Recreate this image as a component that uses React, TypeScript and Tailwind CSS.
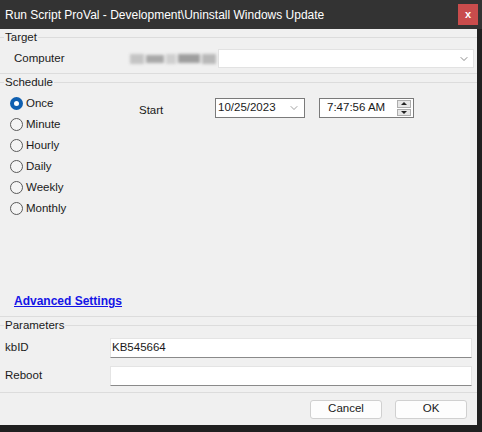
import { ChevronDown } from "lucide-react";

const font = { fontFamily: '"Liberation Sans", Arial, sans-serif' };

function Legend({ label }: { label: string }) {
  return (
    <div className="h-[14px] flex items-center">
      <div className="w-[4px] h-px bg-[#dcdcdc]" />
      <span className="px-[1px] text-[11.5px] leading-[14px] text-[#1a1a1a]">{label}</span>
      <div className="flex-1 h-px bg-[#dcdcdc]" />
    </div>
  );
}

function Radio({ label, checked }: { label: string; checked?: boolean }) {
  return (
    <div className="h-[21px] flex items-center gap-[3px]">
      {checked ? (
        <div className="w-[13px] h-[13px] rounded-full bg-[#0f5fb0] flex items-center justify-center">
          <div className="w-[5px] h-[5px] rounded-full bg-white" />
        </div>
      ) : (
        <div className="w-[13px] h-[13px] rounded-full border border-[#5a5a5a] bg-[#f4f4f4]" />
      )}
      <span className="text-[11.5px] text-[#1a1a1a]">{label}</span>
    </div>
  );
}

function ParamRow({ label, value }: { label: string; value?: string }) {
  return (
    <div className="h-[28px] flex items-center">
      <span className="w-[110px] pl-[5px] text-[11.5px] text-[#1a1a1a]">{label}</span>
      <div className="w-[362px] h-[20px] bg-white border border-[#e4e4e4] border-b-[#8a8a8a] flex items-center px-[1px] text-[11.5px] text-[#1a1a1a]">
        {value}
      </div>
    </div>
  );
}

export default function App() {
  return (
    <div className="w-[482px] h-[432px] bg-[#202020] flex flex-col" style={font}>
      <div className="h-[29px] bg-[#333333] flex items-center justify-between">
        <span className="pl-[5px] text-[12px] text-white">
          Run Script ProVal - Development\Uninstall Windows Update
        </span>
        <div className="w-[20px] h-[21px] mr-[4px] bg-[#c94c4c] flex items-center justify-center text-white text-[11px] font-bold leading-none">
          x
        </div>
      </div>

      <div className="w-[477px] h-[396px] bg-[#f0f0f0] flex flex-col">
        <div className="pt-[1px]">
          <Legend label="Target" />
        </div>
        <div className="h-[29px] flex items-center">
          <span className="w-[130px] pl-[14px] text-[11.5px] text-[#1a1a1a]">Computer</span>
          <div className="w-[88px] h-[17px] flex items-center gap-[2px] blur-[1.5px]">
            <div className="w-[14px] h-[10px] bg-[#c4c4c4]" />
            <div className="w-[18px] h-[8px] bg-[#a8a8a8]" />
            <div className="w-[10px] h-[10px] bg-[#cfcfcf]" />
            <div className="w-[22px] h-[9px] bg-[#9e9e9e]" />
            <div className="w-[14px] h-[10px] bg-[#b8b8b8]" />
          </div>
          <div className="w-[256px] h-[19px] bg-white border border-[#e2e2e2] flex items-center justify-end pr-[3px]">
            <ChevronDown className="w-[12px] h-[12px] text-[#444]" strokeWidth={1.25} />
          </div>
        </div>
        <div className="h-px bg-[#dcdcdc]" />
        <div className="pt-[1px]">
          <Legend label="Schedule" />
        </div>

        <div className="flex pt-[4px]">
          <div className="w-[139px] pl-[10px] flex flex-col">
            <Radio label="Once" checked />
            <Radio label="Minute" />
            <Radio label="Hourly" />
            <Radio label="Daily" />
            <Radio label="Weekly" />
            <Radio label="Monthly" />
          </div>
          <div className="flex items-start pt-[5px]">
            <span className="w-[76px] text-[11.5px] text-[#1a1a1a] pt-[4px]">Start</span>
            <div className="w-[90px] h-[20px] bg-white border border-[#7a7a7a] flex items-center justify-between pl-[2px] pr-[4px] text-[11.5px] text-[#1a1a1a]">
              10/25/2023
              <ChevronDown className="w-[12px] h-[12px] text-[#666]" strokeWidth={1.25} />
            </div>
            <div className="ml-[14px] w-[95px] h-[20px] bg-white border border-[#7a7a7a] flex items-center justify-between pl-[7px] pr-[2px] text-[11.5px] text-[#1a1a1a]">
              7:47:56 AM
              <div className="w-[14px] h-[16px] flex flex-col gap-px">
                <div className="flex-1 bg-[#e6e6e6] border border-[#adadad] flex items-center justify-center">
                  <div className="w-0 h-0 border-l-[3px] border-r-[3px] border-b-[3px] border-l-transparent border-r-transparent border-b-[#222]" />
                </div>
                <div className="flex-1 bg-[#e6e6e6] border border-[#adadad] flex items-center justify-center">
                  <div className="w-0 h-0 border-l-[3px] border-r-[3px] border-t-[3px] border-l-transparent border-r-transparent border-t-[#222]" />
                </div>
              </div>
            </div>
          </div>
        </div>

        <div className="flex-1 flex items-end pl-[14px] pb-[8px]">
          <span className="text-[12px] font-bold text-[#1414e6] underline leading-[14px]">
            Advanced Settings
          </span>
        </div>
        <div className="h-px bg-[#dcdcdc]" />
        <div className="pt-[1px]">
          <Legend label="Parameters" />
        </div>
        <div className="pt-[2px] flex flex-col">
          <ParamRow label="kbID" value="KB545664" />
          <ParamRow label="Reboot" />
        </div>
        <div className="h-px bg-[#dcdcdc] mt-[2px]" />
        <div className="h-[32px] flex items-center justify-end gap-[13px] pr-[10px]">
          <button className="w-[72px] h-[19px] bg-[#fdfdfd] border border-[#d0d0d0] rounded-[3px] text-[11.5px] text-[#1a1a1a] leading-none">
            Cancel
          </button>
          <button className="w-[72px] h-[19px] bg-[#fdfdfd] border border-[#d0d0d0] rounded-[3px] text-[11.5px] text-[#1a1a1a] leading-none">
            OK
          </button>
        </div>
      </div>
    </div>
  );
}
